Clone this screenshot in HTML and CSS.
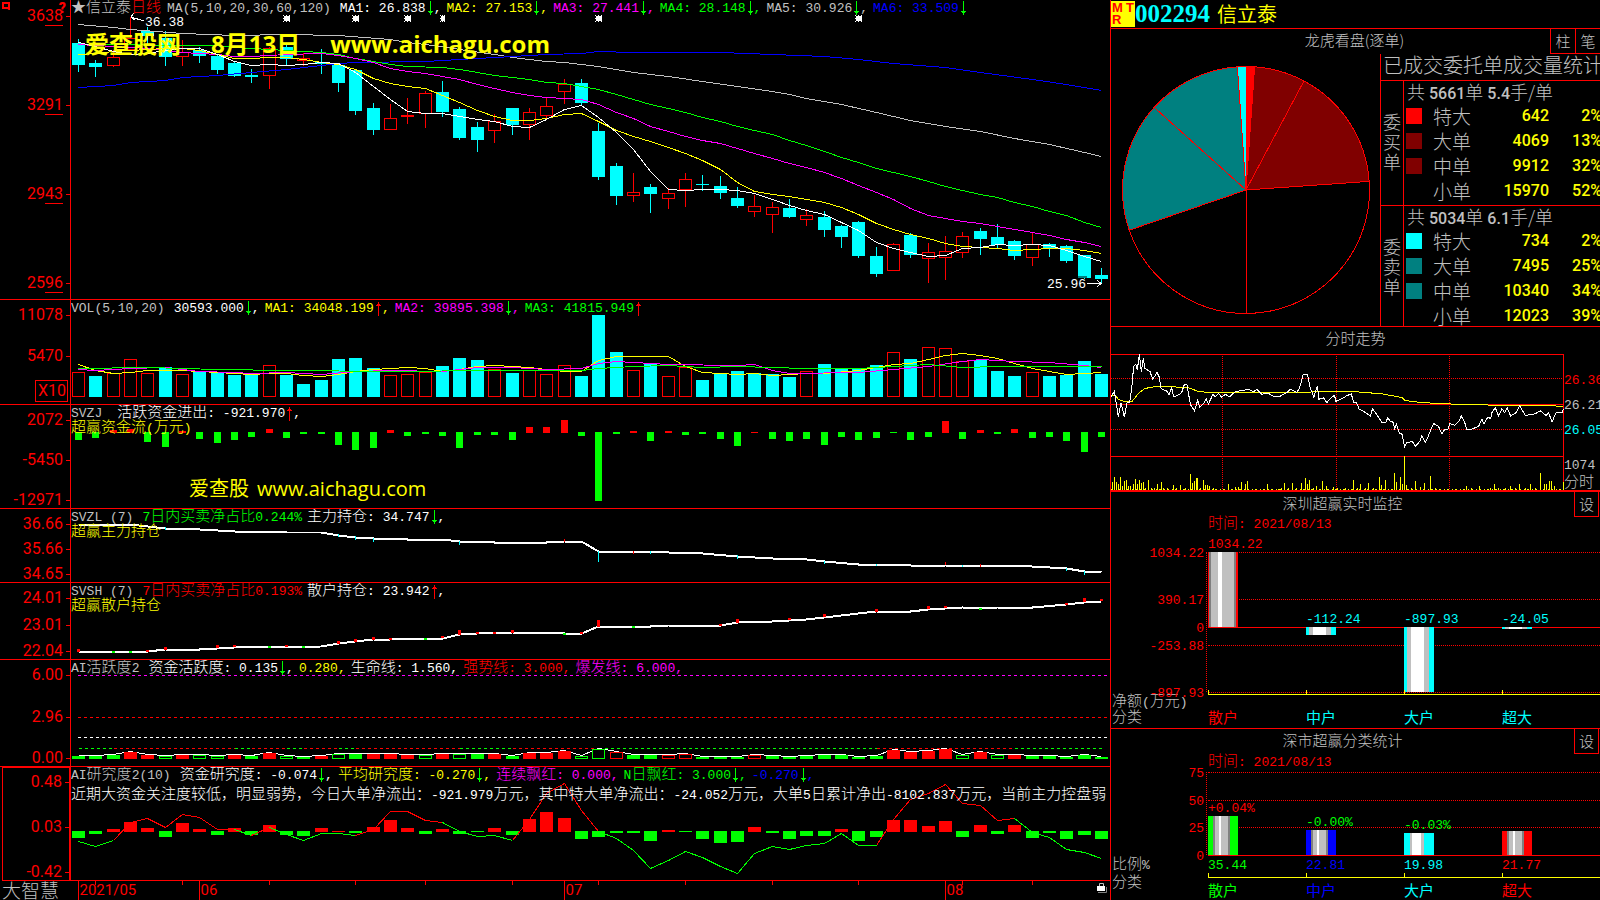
FILE: index.html
```html
<!DOCTYPE html>
<html lang="zh-CN">
<head>
    <meta charset="UTF-8">
    <meta name="viewport" content="width=device-width, initial-scale=1.0">
    <title>002294 信立泰 日线</title>
    <link rel="stylesheet" href="styles.css">
</head>
<body>

    <!-- shared arrows for the indicator values -->
    <svg class="defs" width="0" height="0">
        <symbol id="down" viewBox="0 0 8 15"><path d="M4.5 0V14M2 10.5H7M3 11.5H6" stroke="#0f0" fill="none"/></symbol>
        <symbol id="up" viewBox="0 0 8 15"><path d="M4.5 1V15M2 4.5H7M3 3.5H6" stroke="#f00" fill="none"/></symbol>
    </svg>

    <div class="terminal">
        <main class="charts">

            <section class="panel">
                <div class="scale scale-price">
                    <svg class="logo" viewBox="0 0 8 8"><path d="M1 1H7V6H1ZM6 6L8 8" fill="none" stroke="#f00" stroke-width="2"/></svg>
                    <span class="help">?</span>
                    <span class="mark">36<u>38</u></span>
                    <span class="mark">32<u>91</u></span>
                    <span class="mark">29<u>43</u></span>
                    <span class="mark">25<u>96</u></span>
                </div>
                <div class="plot" id="price">
                    <svg class="chart" viewBox="71 0 1039 299" preserveAspectRatio="none"></svg>
                    <div class="legend">
                        <span class="silver stock"><span class="cn">★信立泰</span><span class="cn red">日线</span></span>
                        <span class="name">MA(5,10,20,30,60,120)</span>
                        <span class="white">MA1: 26.838<svg><use href="#down"/></svg>,</span>
                        <span class="yellow">MA2: 27.153<svg><use href="#down"/></svg>,</span>
                        <span class="magenta">MA3: 27.441<svg><use href="#down"/></svg>,</span>
                        <span class="green">MA4: 28.148<svg><use href="#down"/></svg>,</span>
                        <span class="silver">MA5: 30.926<svg><use href="#down"/></svg>,</span>
                        <span class="blue">MA6: 33.509<svg><use href="#down"/></svg></span>
                    </div>
                    <span class="note note-high">36.38</span>
                    <span class="note note-low">25.96</span>
                    <div class="banner"><span>爱查股网</span><span>8月13日</span><span>www.aichagu.com</span></div>
                </div>
            </section>

            <section class="panel">
                <div class="scale scale-vol">
                    <span class="mark">11078</span>
                    <span class="mark">5470</span>
                    <span class="times">X10</span>
                </div>
                <div class="plot" id="volume">
                    <svg class="chart" viewBox="71 300 1039 104" preserveAspectRatio="none"></svg>
                    <div class="legend">
                        <span class="name">VOL(5,10,20)</span>
                        <span class="white">30593.000<svg><use href="#down"/></svg>,</span>
                        <span class="yellow">MA1: 34048.199<svg><use href="#up"/></svg>,</span>
                        <span class="magenta">MA2: 39895.398<svg><use href="#down"/></svg>,</span>
                        <span class="green">MA3: 41815.949<svg><use href="#up"/></svg></span>
                    </div>
                </div>
            </section>

            <section class="panel">
                <div class="scale scale-flow">
                    <span class="mark">2072</span>
                    <span class="mark">-5450</span>
                    <span class="mark">-12971</span>
                </div>
                <div class="plot" id="flow">
                    <svg class="chart" viewBox="71 405 1039 103" preserveAspectRatio="none"></svg>
                    <div class="legend">
                        <span class="name">SVZJ</span>
                        <span class="white wide"><span class="cn">活跃资金进出</span>: -921.970<svg><use href="#up"/></svg>,</span>
                        <div class="caption yellow"><span class="cn">超赢资金流</span>(<span class="cn">万元</span>)</div>
                    </div>
                    <div class="banner banner-small"><span>爱查股</span><span>www.aichagu.com</span></div>
                </div>
            </section>

            <section class="panel">
                <div class="scale scale-hold">
                    <span class="mark">36.66</span>
                    <span class="mark">35.66</span>
                    <span class="mark">34.65</span>
                </div>
                <div class="plot" id="main-hold">
                    <svg class="chart" viewBox="71 509 1039 73" preserveAspectRatio="none"></svg>
                    <div class="legend">
                        <span class="name">SVZL (7)</span>
                        <span class="green">7<span class="cn">日内买卖净占比</span>0.244%</span>
                        <span class="white"><span class="cn">主力持仓</span>: 34.747<svg><use href="#down"/></svg>,</span>
                        <div class="caption yellow"><span class="cn">超赢主力持仓</span></div>
                    </div>
                </div>
            </section>

            <section class="panel">
                <div class="scale scale-hold">
                    <span class="mark">24.01</span>
                    <span class="mark">23.01</span>
                    <span class="mark">22.04</span>
                </div>
                <div class="plot" id="retail-hold">
                    <svg class="chart" viewBox="71 583 1039 76" preserveAspectRatio="none"></svg>
                    <div class="legend">
                        <span class="name">SVSH (7)</span>
                        <span class="red">7<span class="cn">日内买卖净占比</span>0.193%</span>
                        <span class="white"><span class="cn">散户持仓</span>: 23.942<svg><use href="#up"/></svg>,</span>
                        <div class="caption yellow"><span class="cn">超赢散户持仓</span></div>
                    </div>
                </div>
            </section>

            <section class="panel">
                <div class="scale scale-active">
                    <span class="mark">6.00</span>
                    <span class="mark">2.96</span>
                    <span class="mark">0.00</span>
                </div>
                <div class="plot" id="active">
                    <svg class="chart" viewBox="71 660 1039 106" preserveAspectRatio="none"></svg>
                    <div class="legend">
                        <span class="name">AI<span class="cn">活跃度</span>2</span>
                        <span class="white"><span class="cn">资金活跃度</span>: 0.135<svg><use href="#down"/></svg>,</span>
                        <span class="yellow">0.280,</span>
                        <span class="white"><span class="cn">生命线</span>: 1.560,</span>
                        <span class="red"><span class="cn">强势线</span>: 3.000,</span>
                        <span class="magenta"><span class="cn">爆发线</span>: 6.000,</span>
                    </div>
                </div>
            </section>

            <section class="panel panel-last">
                <div class="scale scale-study">
                    <span class="mark">0.48</span>
                    <span class="mark">0.03</span>
                    <span class="mark">-0.42</span>
                </div>
                <div class="plot" id="study">
                    <svg class="chart" viewBox="71 767 1039 113" preserveAspectRatio="none"></svg>
                    <div class="legend">
                        <span class="name">AI<span class="cn">研究度</span>2(10)</span>
                        <span class="white"><span class="cn">资金研究度</span>: -0.074<svg><use href="#down"/></svg>,</span>
                        <span class="yellow"><span class="cn">平均研究度</span>: -0.270<svg><use href="#down"/></svg>,</span>
                        <span class="magenta"><span class="cn">连续飘红</span>: 0.000,</span>
                        <span class="green">N<span class="cn">日飘红</span>: 3.000<svg><use href="#down"/></svg>,</span>
                        <span class="blue">-0.270<svg><use href="#down"/></svg>,</span>
                        <div class="caption comment white"><span class="cn">近期大资金关注度较低，明显弱势，今日大单净流出：</span>-921.979<span class="cn">万元，其中特大单净流出：</span>-24.052<span class="cn">万元，大单</span>5<span class="cn">日累计净出</span>-8102.837<span class="cn">万元，当前主力控盘弱</span></div>
                    </div>
                </div>
            </section>

            <footer class="timeline">
                <span class="brand">大智慧</span>
                <div class="dates" id="dates">
                    <svg class="chart" viewBox="71 881 1039 19" preserveAspectRatio="none"></svg>
                    <svg class="lock" viewBox="0 0 11 12"><path d="M2.5 4V1.5H6.5V4" fill="none" stroke="#c0c0c0"/><path d="M0 4H8V9H0Z" fill="#fff"/><path d="M9.5 5V10.5H1" fill="none" stroke="#808080"/></svg>
                </div>
            </footer>
        </main>

        <aside class="side">
            <header class="quote">
                <span class="badge"><b>M</b><b>T</b><b>R</b></span>
                <span class="code">002294</span>
                <h1>信立泰</h1>
            </header>

            <section class="orders">
                <div class="bar-title">
                    <h2>龙虎看盘(逐单)</h2>
                    <button type="button">柱</button>
                    <button type="button">笔</button>
                </div>
                <div class="orders-body">
                    <svg id="pie" viewBox="1111 54 269 272"></svg>
                    <div class="orders-data">
                        <h3>已成交委托单成交量统计</h3>
                        <div class="book">
                            <div class="book-side">委买单</div>
                            <table>
                                <colgroup><col class="col-key"><col class="col-label"><col><col class="col-pct"></colgroup>
                                <tr><th colspan="4" class="sum">共 <b>5661</b>单 <b>5.4</b>手/单</th></tr>
                                <tr><td><i class="key bg-red"></i></td><th>特大</th><td>642</td><td>2%</td></tr>
                                <tr><td><i class="key bg-maroon"></i></td><th>大单</th><td>4069</td><td>13%</td></tr>
                                <tr><td><i class="key bg-maroon"></i></td><th>中单</th><td>9912</td><td>32%</td></tr>
                                <tr><td></td><th>小单</th><td>15970</td><td>52%</td></tr>
                            </table>
                        </div>
                        <div class="book">
                            <div class="book-side">委卖单</div>
                            <table>
                                <colgroup><col class="col-key"><col class="col-label"><col><col class="col-pct"></colgroup>
                                <tr><th colspan="4" class="sum">共 <b>5034</b>单 <b>6.1</b>手/单</th></tr>
                                <tr><td><i class="key bg-cyan"></i></td><th>特大</th><td>734</td><td>2%</td></tr>
                                <tr><td><i class="key bg-teal"></i></td><th>大单</th><td>7495</td><td>25%</td></tr>
                                <tr><td><i class="key bg-teal"></i></td><th>中单</th><td>10340</td><td>34%</td></tr>
                                <tr><td></td><th>小单</th><td>12023</td><td>39%</td></tr>
                            </table>
                        </div>
                    </div>
                </div>
            </section>

            <section class="intraday">
                <h2>分时走势</h2>
                <div class="intraday-body">
                    <svg class="chart" id="minute" viewBox="18 88 1358 403" preserveAspectRatio="none"></svg>
                    <div class="intraday-scale">
                        <span class="red">26.36</span>
                        <span>26.21</span>
                        <span class="cyan">26.05</span>
                        <span class="turnover">1074</span>
                        <span class="cn">分时</span>
                    </div>
                </div>
            </section>

            <section class="stat">
                <div class="bar-title">
                    <h2>深圳超赢实时监控</h2>
                    <button type="button">设</button>
                </div>
                <p class="date"><span class="cn">时间</span>: 2021/08/13</p>
                <div class="stat-chart net" id="net"></div>
                <div class="stat-foot">
                    <div class="foot-label"><span class="cn">净额</span>(<span class="cn">万元</span>)<br><span class="cn">分类</span></div>
                    <div class="cats"><span class="red">散户</span><span class="cyan">中户</span><span class="cyan">大户</span><span class="cyan">超大</span></div>
                </div>
            </section>

            <section class="stat stat-last">
                <div class="bar-title">
                    <h2>深市超赢分类统计</h2>
                    <button type="button">设</button>
                </div>
                <p class="date"><span class="cn">时间</span>: 2021/08/13</p>
                <div class="stat-chart" id="share"></div>
                <div class="stat-foot share-foot">
                    <div class="foot-label"><span class="cn">比例</span>%<br><span class="cn">分类</span></div>
                    <div>
                        <div class="values"><span class="green">35.44</span><span class="blue">22.81</span><span class="cyan">19.98</span><span class="red">21.77</span></div>
                        <div class="cats"><span class="green">散户</span><span class="blue">中户</span><span class="cyan">大户</span><span class="red">超大</span></div>
                    </div>
                </div>
            </section>
        </aside>
    </div>

    <script src="script.js"></script>
</body>
</html>
```

FILE: styles.css
```css
* {
    box-sizing: border-box;
}
body {
    margin: 0;
    background: #000;
    color: #c0c0c0;
    font-family: "Liberation Mono", "Noto Sans CJK SC", monospace;
    font-size: 13px;
    line-height: 15px;
}
h1, h2, h3, p {
    margin: 0;
    font-weight: normal;
}
.defs {
    position: absolute;
}
/* Chinese runs are larger than the digits but must not grow the line */
.cn {
    font-family: "Noto Sans CJK SC", sans-serif;
    font-size: 15px;
    font-weight: 300;
    line-height: 0;
}
.white { color: #fff; }
.yellow { color: #ff0; }
.magenta { color: #f0f; }
.green { color: #0f0; }
.silver { color: #c0c0c0; }
.blue { color: #00f; }
.red { color: #f00; }
.cyan { color: #0ff; }

.terminal {
    display: grid;
    grid-template: minmax(0, 1fr) / minmax(0, 1110fr) minmax(0, 490fr);
    height: 100vh;
    overflow: hidden;
}

/* left: chart panels */
.charts {
    display: grid;
    grid-template-rows: minmax(0, 300fr) minmax(0, 105fr) minmax(0, 104fr) minmax(0, 74fr) minmax(0, 77fr) minmax(0, 107fr) minmax(0, 114fr) 19px;
    min-width: 0;
}
.panel {
    display: grid;
    grid-template: minmax(0, 1fr) / 71px minmax(0, 1fr);
    min-height: 0;
    border-bottom: 1px solid #f00;
}
.panel-last {
    border-bottom: none;
}
.panel-last .plot {
    border-bottom: 1px solid #f00;
}
.scale {
    position: relative;
    display: flex;
    flex-direction: column;
    align-items: flex-end;
    justify-content: space-between;
    padding-right: 7px;
    border-right: 1px solid #f00;
    color: #f00;
    font-family: Roboto, "Liberation Sans", sans-serif;
    font-size: 16px;
    line-height: 16px;
}
.scale-price { padding-top: 8px; padding-bottom: 8px; }
.scale-vol { padding-top: 7px; }
.scale-vol .mark + .mark { margin-top: 9px; }
.scale-flow { padding-top: 7px; }
.scale-hold { padding-top: 7px; }
.scale-active { padding-top: 7px; }
.scale-study {
    margin-left: 2px;
    padding-top: 6px;
    border: 1px solid #f00;
    border-right-width: 2px;
}
.mark {
    position: relative;
}
.mark::after {
    content: "";
    position: absolute;
    top: 8px;
    right: -7px;
    width: 4px;
    border-top: 1px solid #f00;
}
.mark u {
    text-decoration: none;
    display: inline-block;
    height: 18px;
    margin-bottom: -2px;
    border-bottom: 1px solid #f00;
}
.times {
    margin: 0 -5px 2px 0;
    padding: 2px 1px 2px 2px;
    border: 1px solid #f00;
}
.logo {
    position: absolute;
    top: 2px;
    left: 2px;
    width: 8px;
    height: 8px;
}
.help {
    position: absolute;
    top: 0;
    right: 4px;
    font-size: 14px;
    font-weight: 900;
}
.plot {
    position: relative;
    display: grid;
    grid-template: minmax(0, 1fr) / minmax(0, 1fr);
    min-height: 0;
    overflow: hidden;
}
.plot > * {
    grid-area: 1 / 1;
}
.chart {
    display: block;
    width: 100%;
    height: 100%;
    min-height: 0;
    fill: none;
    shape-rendering: crispEdges;
}
.chart * {
    vector-effect: non-scaling-stroke;
}
.legend {
    align-self: start;
    display: flex;
    flex-wrap: wrap;
    column-gap: 5px;
    padding-top: 1px;
    white-space: pre;
}
.legend > * {
    height: 15px;
}
.legend svg {
    width: 8px;
    height: 15px;
    vertical-align: top;
}
.name {
    margin-right: 4px;
    color: #c0c0c0;
}
.wide {
    padding-left: 6px;
}
.stock {
    margin-right: 1px;
}
.caption {
    width: 100%;
}
.comment {
    margin-top: 5px;
}
.note {
    position: absolute;
    color: #fff;
}
.note-high {
    top: 15px;
    left: 74px;
}
.note-low {
    right: 24px;
    bottom: 7px;
}
.banner {
    display: flex;
    gap: 30px;
    align-self: start;
    margin: 28px 0 0 14px;
    color: #ff0;
    font: bold 24px/32px "Open Sans", "Noto Sans CJK SC", sans-serif;
}
.banner-small {
    gap: 8px;
    margin: 68px 0 0 118px;
    font-size: 20px;
    font-weight: normal;
    line-height: 32px;
}
.timeline {
    display: grid;
    grid-template-columns: 71px minmax(0, 1fr);
}
.brand {
    padding-left: 2px;
    font: 300 19px/17px "Noto Sans CJK SC", sans-serif;
}
.dates {
    position: relative;
    color: #f00;
    font: 15px/18px Roboto, "Liberation Sans", sans-serif;
}
.dates span {
    position: absolute;
    top: 0;
    padding-left: 1px;
}
.lock {
    position: absolute;
    top: 1px;
    right: 2px;
    width: 11px;
    height: 12px;
}

/* right: quote column */
.side {
    display: grid;
    grid-template-rows: 29px minmax(0, 298fr) minmax(0, 165fr) minmax(0, 237fr) minmax(0, 171fr);
    min-width: 0;
    border-left: 1px solid #f00;
}
.side > * {
    min-width: 0;
    border-bottom: 1px solid #f00;
}
.quote {
    display: flex;
    align-items: center;
}
.badge {
    display: grid;
    grid-template-columns: 1fr 8px;
    width: 24px;
    height: 26px;
    padding: 1px;
    background: #ff0;
    color: #f00;
    font: 900 13px/12px "Liberation Sans", sans-serif;
}
.code {
    color: #0ff;
    font: bold 25px/30px "Liberation Serif", serif;
}
.quote h1 {
    margin-left: 7px;
    color: #ff0;
    font: 20px/26px "Noto Sans CJK SC", sans-serif;
}
.side h2, .side h3, .side button {
    font-family: "Noto Sans CJK SC", sans-serif;
    font-size: 15px;
    font-weight: 300;
}
.side h2 {
    text-align: center;
    line-height: 22px;
}
.bar-title {
    display: flex;
    height: 25px;
}
.bar-title h2 {
    flex: 1;
}
.orders .bar-title h2 {
    padding-left: 48px;
}
.bar-title button {
    width: 25px;
    padding: 0;
    border: solid #f00;
    border-width: 0 0 1px 1px;
    background: #000;
    color: #c0c0c0;
    line-height: 20px;
}
.orders {
    display: grid;
    grid-template-rows: 25px minmax(0, 1fr);
}
.orders-body {
    display: grid;
    grid-template: minmax(0, 1fr) / minmax(0, 269fr) minmax(0, 220fr);
    min-height: 0;
}
#pie {
    width: 100%;
    height: 100%;
    min-height: 0;
}
.orders-data {
    display: grid;
    grid-template-rows: 26px 125px minmax(0, 1fr);
    border-left: 1px solid #f00;
    overflow: hidden;
}
.side h3 {
    padding-left: 2px;
    font-size: 20px;
    line-height: 22px;
    white-space: nowrap;
}
.book {
    display: grid;
    grid-template-columns: 23px minmax(0, 1fr);
    align-items: start;
    border-top: 1px solid #f00;
    overflow: hidden;
}
.book-side {
    display: flex;
    align-items: center;
    align-self: stretch;
    padding: 0 2px 6px;
    border-right: 1px solid #f00;
    font: 300 18px/20px "Noto Sans CJK SC", sans-serif;
}
.book table {
    width: 100%;
    border-collapse: collapse;
    table-layout: fixed;
    font: 500 16px/20px Roboto, "Noto Sans CJK SC", sans-serif;
}
.book td, .book th {
    height: 25px;
    padding: 0;
    text-align: right;
    vertical-align: top;
    white-space: nowrap;
}
.book th {
    font: 300 19px/20px "Noto Sans CJK SC", sans-serif;
    text-align: left;
}
.book .sum {
    padding-left: 3px;
    font-size: 18px;
}
.sum b {
    font: 500 16px/20px Roboto, sans-serif;
}
.book td {
    color: #ff0;
}
.book td:nth-child(3) {
    padding-right: 4px;
}
.book td:last-child {
    padding-right: 1px;
}
.col-key { width: 29px; }
.col-label { width: 45px; }
.col-pct { width: 50px; }
.key {
    display: block;
    width: 16px;
    height: 16px;
    margin: 2px 0 0 2px;
}
.bg-red { background: #f00; }
.bg-maroon { background: #800000; }
.bg-cyan { background: #0ff; }
.bg-teal { background: #008080; }

.side .intraday {
    display: grid;
    grid-template-rows: 27px minmax(0, 1fr);
    border-bottom-width: 2px;
}
.intraday-body {
    display: grid;
    grid-template: minmax(0, 1fr) / minmax(0, 1fr) 36px;
    min-height: 0;
}
.intraday-scale {
    display: flex;
    flex-direction: column;
    gap: 10px;
    padding: 19px 0 0;
    overflow: hidden;
}
.turnover {
    margin-top: 10px;
}
.intraday-scale .cn {
    margin-top: -10px;
    line-height: 15px;
}

.stat {
    display: grid;
    grid-template-rows: 25px 15px minmax(0, 1fr) 36px;
}
.stat .bar-title {
    padding-right: 1px;
}
.stat .bar-title button {
    border-right-width: 1px;
}
.stat-last {
    grid-template-rows: 25px 17px minmax(0, 1fr) 45px;
}
.side .stat-last {
    border-bottom: none;
}
.date {
    padding-left: 97px;
    color: #f00;
}
.stat-last .date {
    padding-top: 1px;
}
.stat-chart {
    position: relative;
    display: grid;
    grid-template-columns: repeat(4, minmax(0, 1fr));
    margin: 1px 0 0 97px;
}
.net {
    margin-top: 20px;
}
.stat-chart::before {
    content: "";
    position: absolute;
    top: 0;
    bottom: 0;
    left: -2px;
    border-left: 1px dotted #f00;
}
.rule {
    position: absolute;
    left: 0;
    right: 0;
    border-top: 1px dotted #f00;
}
.rule-zero {
    border-top-style: solid;
}
.rule span {
    position: absolute;
    top: -7px;
    right: 100%;
    padding-right: 4px;
    color: #f00;
}
.col {
    position: relative;
}
.col span {
    position: absolute;
    left: 0;
}
.bar {
    position: absolute;
    left: 0;
    width: 30px;
}
.red .bar { --c: #f00; }
.green .bar { --c: #0f0; }
.blue .bar { --c: #00f; }
.cyan .bar { --c: #0ff; }
.bar-solid {
    background: linear-gradient(90deg, var(--c) 1px, #808080 1px 3px, #c0c0c0 3px 10px, #fff 10px 14px, #c0c0c0 14px 26px, #808080 26px 28px, var(--c) 28px);
}
.bar-light {
    background: linear-gradient(90deg, var(--c) 3px, #c0c0c0 3px 7px, #fff 7px 20px, #c0c0c0 20px 25px, var(--c) 25px);
}
.bar-tube {
    background: linear-gradient(90deg, var(--c) 5px, #808080 5px 7px, #c0c0c0 7px 11px, #fff 11px 13px, #c0c0c0 13px 20px, #808080 20px 22px, var(--c) 22px);
}
.bar-core {
    background: linear-gradient(90deg, var(--c) 6px, #c0c0c0 6px 8px, #fff 8px 17px, #c0c0c0 17px 20px, var(--c) 20px);
}
.stat-foot {
    display: grid;
    grid-template-columns: 97px minmax(0, 1fr);
}
.foot-label {
    padding: 3px 0 0 1px;
    line-height: 16px;
    white-space: nowrap;
}
.share-foot .foot-label {
    line-height: 18px;
    padding-top: 2px;
}
.values, .cats {
    display: grid;
    grid-template-columns: repeat(4, minmax(0, 1fr));
}
.values {
    height: 20px;
    line-height: 22px;
}
.cats {
    margin-top: 2px;
    border-top: 1px solid #ff0;
    font: 15px/20px "Noto Sans CJK SC", sans-serif;
}
.cats span {
    position: relative;
    padding-top: 12px;
}
.share-foot .cats span {
    padding-top: 2px;
}
.cats span::before {
    content: "";
    position: absolute;
    top: -5px;
    left: 0;
    height: 5px;
    border-left: 1px solid #ff0;
}
```

FILE: script.js
```js
const NS = 'http://www.w3.org/2000/svg';
const RED = '#f00', CYAN = '#0ff', GREEN = '#0f0', WHITE = '#fff', YELLOW = '#ff0', MAGENTA = '#f0f';

function add(svg, tag, attrs) {
    const node = document.createElementNS(NS, tag);
    for (const key in attrs) node.setAttribute(key, attrs[key]);
    svg.appendChild(node);
    return node;
}
const chart = (id) => document.querySelector('#' + id + ' .chart');
// centre of the i-th trading day
const x = (i) => Math.round(78 + i * 17.34) + 0.5;

function box(svg, cx, w, top, bottom, color, hollow) {
    if (hollow) {
        add(svg, 'rect', { x: cx - w / 2 + 0.5, y: top + 0.5, width: w - 1, height: Math.max(bottom - top - 1, 1), stroke: color, fill: '#000' });
    } else {
        add(svg, 'rect', { x: cx - w / 2, y: top, width: w, height: Math.max(bottom - top, 1), fill: color });
    }
}
function seg(svg, x1, y1, x2, y2, color, dash) {
    add(svg, 'path', { d: `M${x1} ${y1}L${x2} ${y2}`, stroke: color, 'stroke-dasharray': dash || 'none' });
}
// pairs: "day,y day,y ..."
function curve(svg, pairs, color, width) {
    const pts = pairs.split(' ').map((p) => p.split(',').map(Number));
    add(svg, 'polyline', { points: pts.map(([i, y]) => `${x(i)},${y + 0.5}`).join(' '), stroke: color, 'stroke-width': width || 1 });
}
const dense = (ys) => ys.map((y, i) => `${i},${y}`).join(' ');

// ---- daily candles: up/down, high, body top, body bottom, low
const candles = `d39,43,65,72 d60,63,67,77 u50,57,66,67 u17,38,50,50 d27,31,36,44 d31,38,57,66 u40,52,57,66 d47,50,56,63
d54,56,70,74 d62,63,76,77 d69,75,77,83 u47,48,76,89 d45,47,59,65 u53,58,61,66 d49,62,64,74 d63,65,83,92
d69,70,111,115 d103,108,130,135 u104,118,130,130 u98,115,117,124 u91,93,114,128 d81,92,112,117 d107,109,138,140 d122,127,140,152
u114,121,131,143 d108,108,125,135 u108,112,125,140 u98,106,116,118 u79,84,92,104 d79,83,103,106 d123,131,177,180 d163,166,196,205
u173,192,196,202 d184,187,194,213 u188,193,199,209 u173,179,190,207 d175,184,185,191 d176,186,193,199 d187,198,206,208 u195,206,212,217
u202,207,215,233 d199,208,217,218 u209,215,220,226 d211,217,230,237 d225,226,237,248 d221,222,256,258 d247,256,274,277 u243,244,271,271
d233,235,255,258 u243,252,259,283 u236,251,258,280 u232,236,253,258 d228,231,239,255 d224,237,245,248 d240,241,256,260 u232,244,258,266
d243,244,248,257 d245,246,261,263 d255,255,278,279 d268,275,279,284`.split(/\s+/);

const price = chart('price');
candles.forEach((c, i) => {
    const [high, top, bottom, low] = c.slice(1).split(',').map(Number);
    const color = c[0] === 'u' ? RED : CYAN;
    seg(price, x(i), high, x(i), low, color);
    box(price, x(i), 13, top, bottom, color, c[0] === 'u');
});
box(price, x(58) - 2, 9, 276, 278, '#008080');
curve(price, '0,24 2,27 3,29 6,33 9,35 12,34 15,35 18,39 19,42 21,46 22,49 24,54 25,57 27,61 28,62 30,66 32,72 34,76 36,81 38,86 40,91 41,94 42,98 44,104 46,112 48,120 50,126 52,131 54,138 56,144 58,152 59,156', '#c0c0c0');
curve(price, '0,87 2,85 3,82 5,80 6,77 8,75 10,72 12,69 14,65 15,63 16,62 20,61 22,59 25,56 27,54 29,53 30,51 32,52 37,52 40,54 43,56 45,59 47,63 50,67 52,72 55,79 57,84 59,90', '#00f');
curve(price, '0,44 8,45 9,47 11,49 13,51 14,52 15,54 16,58 17,61 18,64 19,66 21,67 22,69 23,72 24,75 25,77 26,79 27,82 28,83 29,86 30,89 31,94 32,99 33,104 34,108 35,112 36,117 37,121 38,126 39,130 40,134 41,140 42,145 43,151 44,157 45,162 46,168 47,172 48,176 49,181 50,186 51,190 52,194 53,197 54,202 55,206 56,211 57,215 58,222 59,227', GREEN);
curve(price, '0,44 4,48 6,52 8,54 9,56 10,56 12,54 14,53 15,55 16,58 17,62 18,68 19,71 20,73 21,76 22,79 23,84 24,88 25,92 26,95 27,97 28,98 29,99 30,104 31,112 32,118 33,126 34,131 35,136 36,140 37,143 38,148 39,153 40,158 41,163 42,167 43,172 44,178 45,185 46,192 47,199 48,208 49,215 50,218 51,221 52,223 53,226 54,229 55,232 56,235 57,239 58,242 59,246', MAGENTA);
curve(price, dense([54, 53, 51, 50, 49, 48, 48, 50, 54, 58, 58, 57, 57, 59, 62, 64, 69, 78, 83, 86, 88, 95, 102, 110, 116, 120, 120, 118, 114, 113, 121, 130, 136, 141, 147, 153, 160, 169, 182, 191, 194, 196, 199, 202, 207, 214, 223, 229, 234, 238, 243, 246, 247, 248, 250, 249, 248, 248, 250, 253]), YELLOW);
curve(price, dense([42, 46, 51, 54, 53, 50, 48, 48, 54, 61, 65, 64, 65, 64, 62, 63, 72, 86, 99, 111, 113, 113, 116, 119, 121, 126, 127, 119, 109, 105, 117, 132, 149, 171, 189, 190, 189, 189, 190, 193, 199, 205, 210, 214, 222, 230, 242, 248, 252, 256, 255, 248, 247, 244, 245, 244, 245, 250, 256, 261]), WHITE);
// event stars
[12, 16, 19, 21, 30, 45].forEach((i) => {
    const w = i === 21 ? 2 : 3;
    add(price, 'path', { d: `M${x(i) - w + 0.5} 16.5h${w * 2 - 1}v4h${1 - w * 2}zM${x(i) - w - 0.5} 18.5h${w * 2 + 1}M${x(i)} 15v7M${x(i) - w - 0.5} 15.5h1M${x(i) + w - 0.5} 15.5h1M${x(i) - w - 0.5} 21.5h1M${x(i) + w - 0.5} 21.5h1`, stroke: WHITE, fill: WHITE });
});
// pointers to the highest and lowest price
add(price, 'path', { d: 'M144 21L131 17M134 13L131 17L135 20M1087 283.5H1101M1097 280L1101 283.5L1097 287', stroke: WHITE });

// ---- volume, negative = hollow red bar
const volume = chart('volume');
[-372, 376, -373, -359, -373, 367, -374, 372, 372, 375, 374, -365, 375, 384, 380, 359, 358, 368, -375, -374, -372, 366, 358, 360, -369, 373, -370, -374, -365, 376,
    315, 352, -370, 363, -376, -367, 380, 373, 371, 373, 374, 377, -371, 364, 368, 368, 365, -352, 359, -347, -348, -361, 360, 371, 376, -372, 376, 375, 361, 374
].forEach((v, i) => box(volume, x(i), 13, Math.abs(v), 397, v < 0 ? RED : CYAN, v < 0));
curve(volume, '0,364 1,370 2,373 3,372 4,370 6,370 8,372 10,374 11,373 12,373 13,375 14,376 15,374 16,371 17,369 18,368 19,367 20,368 21,371 22,369 23,366 24,365 25,366 26,367 27,369 28,371 29,371 30,360 31,356 34,356 35,366 36,372 37,373 38,374 39,373 40,375 42,373 43,373 45,370 46,367 47,364 48,363 49,359 50,355 51,353 52,355 53,358 54,363 55,368 56,371 57,374 58,373 59,372', YELLOW);
curve(volume, '0,369 1,370 3,368 5,367 7,371 9,372 10,373 12,372 14,374 16,371 18,370 21,371 22,369 23,367 25,367 27,369 29,368 30,363 31,361 34,364 38,365 39,364 40,370 41,373 45,372 47,369 49,366 51,361 52,359 54,361 56,362 58,365 59,367', MAGENTA);
curve(volume, '0,368 4,367 8,369 12,370 18,371 24,370 29,370 30,368 32,366 34,365 36,367 38,366 42,368 45,368 47,366 49,364 51,367 53,366 59,366', GREEN);

// ---- money flow
const flow = chart('flow');
[-8, -6, 3, 4, -10, -15, 2, -7, -11, -8, -5, 4, -6, -2, -2, -13, -18, -16, 3, -4, -2, -4, -16, -3, -3, -8, 6, 6, 13, -4,
    -69, -2, 2, -9, 2, -3, -2, -7, -14, 1, -7, -9, -7, -13, -5, -8, -6, -1, -8, -5, 12, -7, 3, -2, 4, -6, -5, -9, -20, -5
].forEach((v, i) => box(flow, x(i), 7, v > 0 ? 433 - v : 432, v > 0 ? 433 : 432 - v, v > 0 ? RED : GREEN));

// ---- holdings
const mainHold = chart('main-hold');
curve(mainHold, '0,524 3,524 4,526 5,528 6,528 7,529 8,530 9,531 12,532 14,532 15,535 16,537 17,538 19,539 21,539 22,541 24,542 27,542 28,541 29,541 30,551 32,551 34,552 36,553 38,556 40,558 42,559 43,561 45,564 47,564 49,566 50,565 54,565 56,567 57,568 58,571 59,572', WHITE, 2);
[[5, 527, 530], [15, 534, 537], [16, 536, 540], [17, 538, 542], [22, 541, 545], [30, 551, 562], [33, 551, 554], [38, 555, 559], [43, 561, 564], [46, 564, 566], [51, 565, 567], [57, 568, 571], [58, 571, 575]]
    .forEach(([i, a, b]) => seg(mainHold, x(i), a, x(i), b, CYAN));
[[28, 539], [32, 551], [50, 562], [52, 564]].forEach(([i, y]) => seg(mainHold, x(i), y, x(i), y + 3, RED));

const retail = chart('retail-hold');
curve(retail, '0,651 4,651 5,649 7,649 8,648 9,647 14,646 15,643 16,641 17,639 18,639 20,638 21,638 22,634 23,633 25,632 26,632 28,633 29,633 30,626 33,626 34,625 37,625 38,622 40,621 42,619 43,617 45,613 46,611 48,611 49,609 51,607 52,608 53,607 55,607 57,604 58,602 59,601', WHITE, 2);
[[0, 649, 3], [4, 650, 2], [5, 647, 3], [8, 645, 3], [9, 645, 2], [12, 645, 2], [15, 641, 3], [16, 639, 3], [17, 637, 3], [18, 638, 2], [21, 636, 2], [22, 630, 5], [23, 632, 2], [24, 632, 2], [25, 630, 3], [29, 632, 2], [30, 620, 7], [37, 624, 2], [38, 619, 4], [41, 618, 2], [43, 614, 3], [46, 609, 3], [49, 606, 3], [50, 606, 2], [57, 603, 2], [58, 598, 4], [59, 599, 2]]
    .forEach(([i, y, h]) => box(retail, x(i), 3, y, y + h, RED));
[[2, 651], [3, 651], [11, 646], [13, 646], [20, 638], [28, 633], [32, 626], [52, 608]].forEach(([i, y]) => box(retail, x(i), 3, y, y + 2, GREEN));

// ---- activity: upper case = filled bar, lower case = hollow
const active = chart('active');
const activity = 'G3 G3 G4 R7 R4 g3 R4 g4 g3 R4 G3 R6 g3 G2 R3 g5 G5 R5 R5 R4 g4 R5 g5 G5 R5 G3 R6 R6 R8 g3 g10 r7 G4 G4 r4 r5 G2 G2 G2 r4 G3 G2 G3 G4 G4 G2 G3 R9 R7 R8 R10 g4 R7 g4 R4 G3 G3 G2 G4 G2'.split(' ');
seg(active, 78, 675.5, 1107, 675.5, MAGENTA, '3 3');
seg(active, 78, 717.5, 1107, 717.5, RED, '3 3');
seg(active, 78, 737.5, 1107, 737.5, WHITE, '3 3');
[[0, 2], [9, 10], [12, 13], [15, 16], [22, 25], [30, 46], [54, 59]].reduce((from, [a, b]) => {
    if (a > from) seg(active, x(from), 748.5, x(a), 748.5, RED, '3 3');
    seg(active, x(a), 748.5, x(b), 748.5, GREEN, '3 3');
    return b;
}, 0);
curve(active, dense(activity.map((a) => 758 - a.slice(1))), WHITE);
activity.forEach((a, i) => box(active, x(i), 13, 759 - a.slice(1), 759, a[0].toUpperCase() === 'G' ? GREEN : RED, a[0] > 'Z'));

// ---- study
const study = chart('study');
[-7, -3, 3, 10, 4, -6, 9, 3, -4, 4, -4, 7, -4, -5, 4, 1, -2, 5, 12, 4, -3, 3, -3, -1, 4, -4, 13, 20, 14, -8,
    -6, -2, -2, -10, 2, -1, -8, -12, -11, 5, -2, -8, -5, -5, 3, -10, -6, 12, 12, 6, 11, -6, 7, -3, 7, -7, -2, -8, -4, -8
].forEach((v, i) => box(study, x(i), 13, v > 0 ? 832 - v : 831, v > 0 ? 832 : 831 - v, v > 0 ? RED : GREEN));
const studyLine = [841, 846, 840, 822, 818, 827, 814, 817, 829, 829, 835, 827, 834, 840, 833, 833, 835, 829, 811, 811, 820, 822, 831, 836, 835, 840, 819, 793, 783, 810,
    831, 838, 850, 868, 860, 851, 857, 866, 873, 853, 846, 849, 845, 843, 833, 845, 845, 819, 799, 793, 784, 803, 805, 820, 818, 832, 837, 849, 852, 858];
[[0, 2, GREEN], [2, 9, RED], [9, 10, GREEN], [10, 11, RED], [11, 16, GREEN], [16, 21, RED], [21, 25, GREEN], [25, 30, RED], [30, 46, GREEN], [46, 54, RED], [54, 59, GREEN]].forEach(([a, b, color]) => {
    curve(study, studyLine.slice(a, b + 1).map((y, k) => `${a + k},${y}`).join(' '), color);
});

// ---- timeline
const dates = document.getElementById('dates');
[[0, '2021/05'], [1], [6], [7, '06'], [11], [16], [20], [25], [28, '07'], [30], [35], [40], [45], [50, '08'], [51], [55]].forEach(([i, text]) => {
    seg(chart('dates'), x(i), 881, x(i), text ? 900 : 885, RED);
    if (!text) return;
    const label = document.createElement('span');
    label.textContent = text;
    label.style.left = (x(i) - 71) / 10.39 + '%';
    dates.appendChild(label);
});

// ---- pie of executed orders, clockwise degrees from the top
const pie = document.getElementById('pie');
[[0, 4, RED], [4, 28, '#800000'], [28, 86, '#800000'], [86, 180, '#000'], [180, 251, '#000'], [251, 312, '#008080'], [312, 356, '#008080'], [356, 360, CYAN]].forEach(([a, b, fill]) => {
    const at = (deg) => `${1246 + 123.5 * Math.sin(deg * Math.PI / 180)} ${190 - 123.5 * Math.cos(deg * Math.PI / 180)}`;
    add(pie, 'path', { d: `M1246 190L${at(a)}A123.5 123.5 0 0 1 ${at(b)}Z`, fill, stroke: RED, 'shape-rendering': 'crispEdges' });
});

// ---- intraday
const minute = document.getElementById('minute');
[352, 694, 1034].forEach((v) => seg(minute, v, 89, v, 491, RED, '1 1'));
[162, 313].forEach((v) => seg(minute, 18, v, 1374, v, RED, '1 1'));
[89.5, 238, 391].forEach((v) => seg(minute, 18, v, 1376, v, RED));
seg(minute, 1374.5, 88, 1374.5, 491, RED);
seg(minute, 18, 489, 1374, 489, YELLOW, '2 3 1 2');
'22,468 28,453 34,468 40,474 46,453 52,480 58,465 64,462 70,480 76,478 84,474 91,459 97,474 103,462 109,470 115,468 122,484 130,462 138,486 148,486 158,474 168,468 176,484 188,485 205,477 215,485 226,477 240,486 256,444 262,470 268,465 274,456 277,456 285,485 295,462 301,477 307,477 314,480 325,484 347,487 370,474 390,483 400,483 409,468 421,474 428,465 487,474 520,487 530,485 538,471 550,485 562,471 575,485 590,471 601,456 607,474 613,462 625,484 635,480 652,465 665,480 685,483 697,485 720,485 745,462 757,485 767,474 780,485 790,471 805,485 823,453 830,477 841,462 868,441 874,468 886,453 893,474 898,391 904,477 920,485 931,465 945,481 957,471 976,450 990,485 1084,480 1100,485 1123,480 1156,484 1168,474 1180,485 1200,485 1216,480 1230,484 1243,474 1260,484 1275,474 1290,484 1306,441 1318,474 1325,474 1333,465 1340,465 1348,480 1374,468'
    .split(' ').forEach((p) => { const [px, py] = p.split(','); seg(minute, px, py, px, 491, YELLOW); });
add(minute, 'polyline', { stroke: YELLOW, points: '18,210 30,210 40,222 60,230 80,230 100,205 120,190 150,185 200,185 250,188 280,199 310,202 590,202 650,199 740,199 830,206 890,217 900,226 950,232 1030,236 1180,240 1350,242 1374,244' });
add(minute, 'polyline', { stroke: WHITE, points: '18,216 28,198 40,275 48,232 58,275 66,232 74,232 80,190 86,124 92,118 97,135 103,88 109,140 115,100 119,130 135,140 143,163 156,143 162,155 168,190 185,198 192,208 200,188 206,215 222,208 230,202 238,178 246,180 256,238 268,256 278,225 284,246 298,232 303,220 310,236 324,207 330,216 340,205 350,216 362,207 372,216 390,200 405,197 430,193 445,200 455,193 470,207 490,204 500,212 515,215 525,213 548,200 555,192 575,202 583,190 594,150 607,148 614,184 626,216 637,182 641,222 655,218 665,232 675,220 688,210 692,228 712,220 724,212 738,206 746,232 754,232 762,252 774,257 796,272 802,250 815,268 830,290 842,290 848,276 855,288 864,290 868,310 874,296 882,322 890,325 898,362 905,350 922,348 931,362 945,345 950,330 960,350 970,330 975,316 985,294 1000,303 1010,325 1018,312 1028,312 1034,294 1048,299 1060,288 1068,272 1078,290 1085,312 1102,310 1120,302 1130,282 1136,294 1148,275 1156,280 1160,262 1170,247 1180,272 1190,250 1198,262 1206,248 1216,272 1232,262 1243,242 1260,270 1290,265 1305,256 1322,270 1330,262 1340,290 1352,262 1370,262 1374,252' });

// ---- bar charts
function bars(id, max, min, rules, items) {
    const root = document.getElementById(id);
    const pct = (v) => (max - v) / (max - min) * 100;
    rules.forEach((v) => {
        root.insertAdjacentHTML('beforeend', `<div class="rule${v === 0 ? ' rule-zero' : ''}" style="top:${pct(v)}%"><span>${v}</span></div>`);
    });
    items.forEach(([value, label, tone, style, labelTone]) => {
        const top = pct(Math.max(value, 0));
        const height = Math.abs(pct(value) - pct(0));
        root.insertAdjacentHTML('beforeend', `<div class="col ${tone}"><div class="bar ${style}" style="top:${top}%;height:${height}%"></div><span class="${labelTone}" style="top:calc(${top}% - 15px)">${label}</span></div>`);
    });
}
bars('net', 1034.22, -897.93, [1034.22, 390.17, 0, -253.88, -897.93], [
    [1034.22, '1034.22', 'red', 'bar-solid', 'red'],
    [-112.24, '-112.24', 'cyan', 'bar-light', 'cyan'],
    [-897.93, '-897.93', 'cyan', 'bar-light', 'cyan'],
    [-24.05, '-24.05', 'cyan', 'bar-light', 'cyan']
]);
bars('share', 75, 0, [75, 50, 25, 0], [
    [35.44, '+0.04%', 'green', 'bar-tube', 'red'],
    [22.81, '-0.00%', 'blue', 'bar-tube', 'green'],
    [19.98, '-0.03%', 'cyan', 'bar-core', 'green'],
    [21.77, '', 'red', 'bar-tube', 'red']
]);
```
